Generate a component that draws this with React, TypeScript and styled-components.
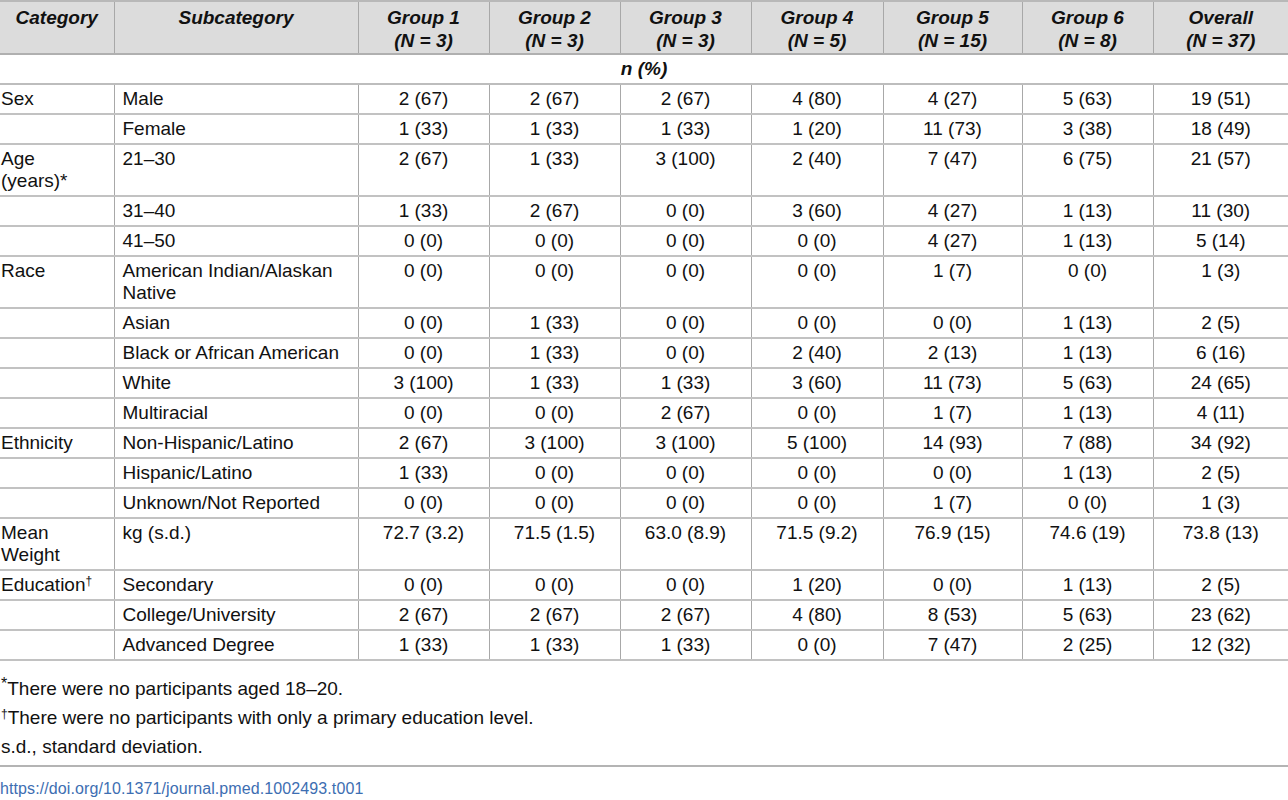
import React from "react";
import styled, { createGlobalStyle } from "styled-components";

const GlobalStyle = createGlobalStyle`
  html, body {
    margin: 0;
    padding: 0;
    background: #ffffff;
  }
  body {
    font-family: "Liberation Sans", Arial, sans-serif;
    color: #111;
  }
`;

const Page = styled.div`
  width: 1288px;
`;

const Table = styled.table`
  width: 1288px;
  border-collapse: collapse;
  table-layout: fixed;
  font-size: 19px;
  line-height: 22px;
`;

const HeadCell = styled.th`
  background: #dcdcdc;
  font-weight: bold;
  font-style: italic;
  text-align: center;
  vertical-align: top;
  padding: 4px 6px 1px;
  line-height: 23px;
  border-top: 2px solid #b8b8b8;
  border-bottom: 2px solid #b0b0b0;
  border-left: 1px solid #a8a8a8;
  &:first-child {
    border-left: none;
  }
`;

const SpanCell = styled.td`
  text-align: center;
  font-weight: bold;
  font-style: italic;
  padding: 3px 0 3px;
  border-bottom: 2px solid #bdbdbd;
`;

const Cell = styled.td<{ $align?: "left" | "center" }>`
  text-align: ${(p) => p.$align ?? "center"};
  vertical-align: top;
  padding: 3px 8px 3px;
  border-bottom: 2px solid #c2c2c2;
  border-left: 1px solid #a8a8a8;
  &:first-child {
    border-left: none;
    padding-left: 1px;
  }
`;

const Notes = styled.div`
  padding-top: 17px;
  font-size: 19px;
  line-height: 22px;
`;

const Note = styled.p`
  margin: 0 0 7px 1px;
`;

const Rule = styled.hr`
  border: none;
  border-top: 2px solid #b4b4b4;
  margin: 2px 0 12px;
`;

const DoiLink = styled.a`
  display: block;
  font-size: 16px;
  line-height: 20px;
  color: #3d6eb2;
  text-decoration: none;
  letter-spacing: 0.1px;
`;

const Sup = styled.sup<{ $size?: number }>`
  font-size: ${(p) => p.$size ?? 12}px;
  line-height: 0;
  vertical-align: 6px;
`;

const columns = [114, 244, 131, 131, 131, 132, 139, 131, 135];

const headers: [string, string?][] = [
  ["Category"],
  ["Subcategory"],
  ["Group 1", "(N = 3)"],
  ["Group 2", "(N = 3)"],
  ["Group 3", "(N = 3)"],
  ["Group 4", "(N = 5)"],
  ["Group 5", "(N = 15)"],
  ["Group 6", "(N = 8)"],
  ["Overall", "(N = 37)"],
];

type Row = {
  category?: React.ReactNode;
  sub: string;
  values: string[];
};

const rows: Row[] = [
  { category: "Sex", sub: "Male", values: ["2 (67)", "2 (67)", "2 (67)", "4 (80)", "4 (27)", "5 (63)", "19 (51)"] },
  { sub: "Female", values: ["1 (33)", "1 (33)", "1 (33)", "1 (20)", "11 (73)", "3 (38)", "18 (49)"] },
  { category: "Age (years)*", sub: "21–30", values: ["2 (67)", "1 (33)", "3 (100)", "2 (40)", "7 (47)", "6 (75)", "21 (57)"] },
  { sub: "31–40", values: ["1 (33)", "2 (67)", "0 (0)", "3 (60)", "4 (27)", "1 (13)", "11 (30)"] },
  { sub: "41–50", values: ["0 (0)", "0 (0)", "0 (0)", "0 (0)", "4 (27)", "1 (13)", "5 (14)"] },
  { category: "Race", sub: "American Indian/Alaskan Native", values: ["0 (0)", "0 (0)", "0 (0)", "0 (0)", "1 (7)", "0 (0)", "1 (3)"] },
  { sub: "Asian", values: ["0 (0)", "1 (33)", "0 (0)", "0 (0)", "0 (0)", "1 (13)", "2 (5)"] },
  { sub: "Black or African American", values: ["0 (0)", "1 (33)", "0 (0)", "2 (40)", "2 (13)", "1 (13)", "6 (16)"] },
  { sub: "White", values: ["3 (100)", "1 (33)", "1 (33)", "3 (60)", "11 (73)", "5 (63)", "24 (65)"] },
  { sub: "Multiracial", values: ["0 (0)", "0 (0)", "2 (67)", "0 (0)", "1 (7)", "1 (13)", "4 (11)"] },
  { category: "Ethnicity", sub: "Non-Hispanic/Latino", values: ["2 (67)", "3 (100)", "3 (100)", "5 (100)", "14 (93)", "7 (88)", "34 (92)"] },
  { sub: "Hispanic/Latino", values: ["1 (33)", "0 (0)", "0 (0)", "0 (0)", "0 (0)", "1 (13)", "2 (5)"] },
  { sub: "Unknown/Not Reported", values: ["0 (0)", "0 (0)", "0 (0)", "0 (0)", "1 (7)", "0 (0)", "1 (3)"] },
  { category: "Mean Weight", sub: "kg (s.d.)", values: ["72.7 (3.2)", "71.5 (1.5)", "63.0 (8.9)", "71.5 (9.2)", "76.9 (15)", "74.6 (19)", "73.8 (13)"] },
  { category: <>Education<Sup>†</Sup></>, sub: "Secondary", values: ["0 (0)", "0 (0)", "0 (0)", "1 (20)", "0 (0)", "1 (13)", "2 (5)"] },
  { sub: "College/University", values: ["2 (67)", "2 (67)", "2 (67)", "4 (80)", "8 (53)", "5 (63)", "23 (62)"] },
  { sub: "Advanced Degree", values: ["1 (33)", "1 (33)", "1 (33)", "0 (0)", "7 (47)", "2 (25)", "12 (32)"] },
];

const App: React.FC = () => {
  return (
    <Page>
      <GlobalStyle />
      <Table>
        <colgroup>
          {columns.map((w, i) => (
            <col key={i} style={{ width: w }} />
          ))}
        </colgroup>
        <thead>
          <tr>
            {headers.map(([title, n]) => (
              <HeadCell key={title}>
                {title}
                {n && (
                  <>
                    <br />
                    {n}
                  </>
                )}
              </HeadCell>
            ))}
          </tr>
        </thead>
        <tbody>
          <tr>
            <SpanCell colSpan={9}>n (%)</SpanCell>
          </tr>
          {rows.map((row) => (
            <tr key={row.sub}>
              <Cell $align="left">{row.category}</Cell>
              <Cell $align="left">{row.sub}</Cell>
              {row.values.map((v, i) => (
                <Cell key={i}>{v}</Cell>
              ))}
            </tr>
          ))}
        </tbody>
      </Table>
      <Notes>
        <Note>
          <Sup $size={16}>*</Sup>There were no participants aged 18–20.
        </Note>
        <Note>
          <Sup>†</Sup>There were no participants with only a primary education level.
        </Note>
        <Note>s.d., standard deviation.</Note>
        <Rule />
        <DoiLink href="#">https://doi.org/10.1371/journal.pmed.1002493.t001</DoiLink>
      </Notes>
    </Page>
  );
};

export default App;
